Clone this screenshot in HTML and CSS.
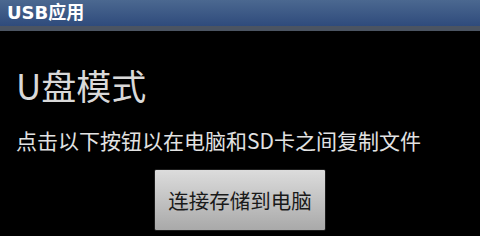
FILE: index.html
```html
<!DOCTYPE html>
<html lang="zh-CN">

<head>
  <meta charset="UTF-8" />
  <title>USB应用</title>
  <link rel="stylesheet" href="styles.css">
</head>

<body>
  <div class="title-bar">USB应用</div>

  <div class="content">
    <h1 class="mode-title">U盘模式</h1>
    <p class="hint">点击以下按钮以在电脑和SD卡之间复制文件</p>
    <div class="actions">
      <button class="mount-btn">连接存储到电脑</button>
    </div>
  </div>
</body>

</html>
```

FILE: styles.css
```css
* {
  box-sizing: border-box;
}

body {
  margin: 0;
  width: 480px;
  height: 236px;
  overflow: hidden;
  background: #000;
  font-family: "Noto Sans CJK SC", "DejaVu Sans", sans-serif;
}

.title-bar {
  height: 31px;
  padding-left: 7px;
  background: linear-gradient(#4b6890, #2f4b7c);
  border-bottom: 5px solid #4b5462;
  color: #fff;
  font-family: "DejaVu Sans", "Noto Sans CJK SC", sans-serif;
  font-weight: bold;
  font-size: 18px;
  line-height: 25px;
}

.content {
  padding: 0 16px;
}

.mode-title {
  margin: 32px 0 0;
  font-size: 35px;
  font-weight: normal;
  line-height: 44px;
  color: #d9d9d9;
}

.hint {
  margin: 19px 0 0;
  font-size: 21px;
  line-height: 28px;
  color: #e2e2e2;
}

.actions {
  display: flex;
  justify-content: center;
  margin-top: 15px;
}

.mount-btn {
  width: 172px;
  height: 62px;
  border: 1px solid #1c1c1c;
  border-radius: 2px;
  background: linear-gradient(#dcdcdc, #a9a9a9);
  color: #1a1a1a;
  font-family: "Noto Sans CJK SC", sans-serif;
  font-size: 20.5px;
  padding: 0;
}
```
